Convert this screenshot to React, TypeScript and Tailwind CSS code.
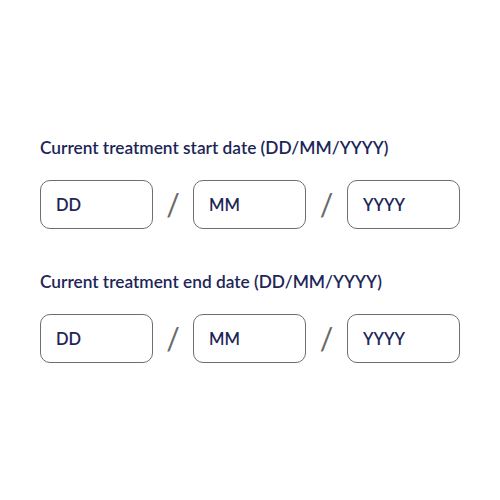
import React from 'react';

const DateGroup: React.FC<{ label: string }> = ({ label }) => {
  return (
    <div className="flex flex-col">
      <label className="text-[17.3px] leading-[20px] font-semibold text-[#1c2657]">{label}</label>
      <div className="mt-[22px] flex items-center">
        <div className="w-[113px] h-[49px] rounded-[10px] border border-[#6e6e6e] flex items-center pl-[15px] pt-[2px] text-[16.5px] font-semibold text-[#1c2657]">
          DD
        </div>
        <span className="w-[40px] text-center text-[30px] font-normal text-[#6a6a6a]">/</span>
        <div className="w-[113px] h-[49px] rounded-[10px] border border-[#6e6e6e] flex items-center pl-[15px] pt-[2px] text-[16.5px] font-semibold text-[#1c2657]">
          MM
        </div>
        <span className="w-[41px] text-center text-[30px] font-normal text-[#6a6a6a]">/</span>
        <div className="w-[113px] h-[49px] rounded-[10px] border border-[#6e6e6e] flex items-center pl-[15px] pt-[2px] text-[16.5px] font-semibold text-[#1c2657]">
          YYYY
        </div>
      </div>
    </div>
  );
};

export default function App() {
  return (
    <div className="w-[500px] h-[500px] bg-white pt-[138px] pl-[40px] flex flex-col gap-[43px]" style={{ fontFamily: 'Lato, "Open Sans", sans-serif' }}>
      <DateGroup label="Current treatment start date (DD/MM/YYYY)" />
      <DateGroup label="Current treatment end date (DD/MM/YYYY)" />
    </div>
  );
}
